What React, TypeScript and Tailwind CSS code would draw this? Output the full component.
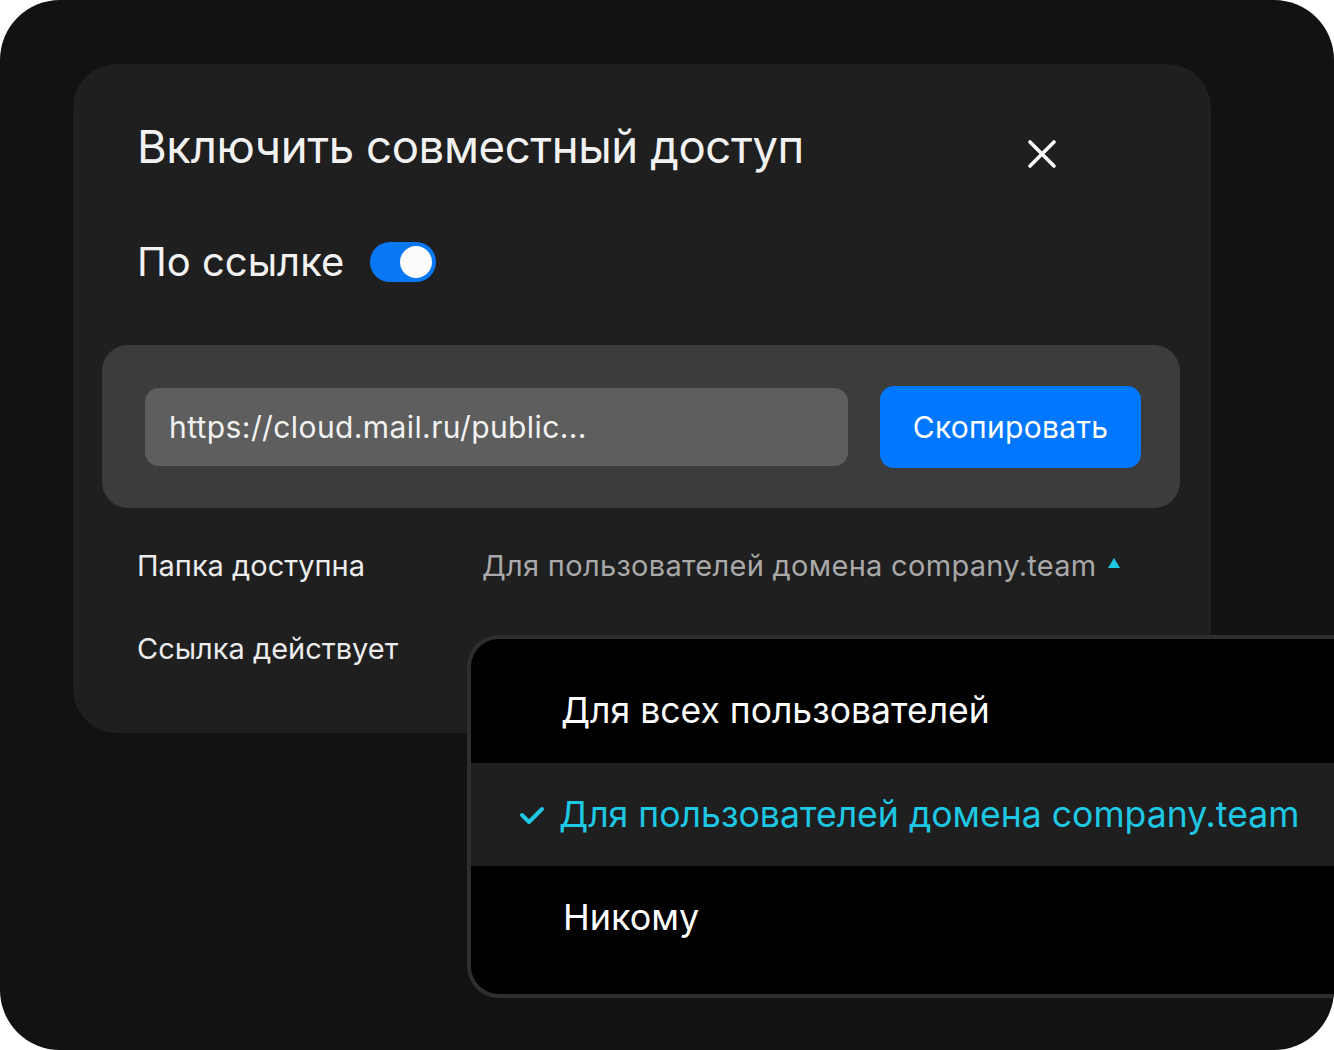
import React from "react";

const font = { fontFamily: "Inter, 'Noto Sans', sans-serif" };

export default function App() {
  return (
    <div className="w-[1334px] h-[1050px] bg-white" style={font}>
      <div className="relative w-[1334px] h-[1050px] rounded-[60px] overflow-hidden bg-[#121212]">
        <div className="ml-[73px] pt-[64px]">
          <div className="w-[1138px] h-[669px] rounded-[44px] bg-[#1f1f1f] pt-[55px]">
            <div className="flex items-center h-[56px] pl-[64px] pr-[150px] justify-between">
              <h1 className="text-[45.5px] leading-none text-[#f2f2f2] font-normal tracking-[-0.4px]">
                Включить совместный доступ
              </h1>
              <svg width="30" height="30" viewBox="0 0 30 30" className="mt-[14px] mr-[4px]">
                <path d="M3 3 L27 27 M27 3 L3 27" stroke="#ffffff" strokeWidth="3.6" strokeLinecap="round" />
              </svg>
            </div>
            <div className="flex items-center h-[40px] mt-[67px] pl-[64px] gap-[26px]">
              <span className="text-[40px] leading-none text-[#f2f2f2]">По ссылке</span>
              <div className="w-[66px] h-[40px] rounded-full bg-[#0a77f5] flex items-center justify-end pr-[4px]">
                <div className="w-[32px] h-[32px] rounded-full bg-[#fdfbfb]" />
              </div>
            </div>
            <div className="ml-[29px] mt-[63px] w-[1078px] h-[163px] rounded-[26px] bg-[#3c3c3c] flex items-center pl-[43px] pr-[39px] gap-[32px]">
              <div className="w-[703px] h-[78px] rounded-[14px] bg-[#5e5e5e] flex items-center pl-[24px]">
                <span className="text-[30px] text-[#f2f2f2] leading-none tracking-[0.4px]">https://cloud.mail.ru/public...</span>
              </div>
              <button className="w-[261px] h-[82px] rounded-[14px] bg-[#0077ff] flex items-center justify-center">
                <span className="text-[30px] text-white leading-none tracking-[0.3px]">Скопировать</span>
              </button>
            </div>
            <div className="flex items-center h-[36px] mt-[39px] pl-[64px]">
              <span className="w-[345px] text-[29px] leading-none text-[#ececec]">Папка доступна</span>
              <span className="text-[29px] leading-none text-[#a9a9a9] tracking-[0.3px]">Для пользователей домена company.team</span>
              <svg width="14" height="12" viewBox="0 0 14 12" className="ml-[10px] mb-[4px]">
                <path d="M7 1 L13 11 L1 11 Z" fill="#1ec8e4" />
              </svg>
            </div>
            <div className="flex items-center h-[36px] mt-[47px] pl-[64px]">
              <span className="text-[29px] leading-none text-[#ececec]">Ссылка действует</span>
            </div>
          </div>
        </div>

        <div className="absolute left-[467px] top-[635px] w-[960px] h-[363px] rounded-[32px] border-[4px] border-[#2e2e2e] bg-black flex flex-col overflow-hidden">
          <div className="h-[124px] flex items-center pl-[90px] pt-[20px]">
            <span className="text-[35.5px] leading-none text-white">Для всех пользователей</span>
          </div>
          <div className="h-[103px] flex items-center bg-[#1f1f1f] pl-[48px]">
            <svg width="26" height="20" viewBox="0 0 26 20" className="mr-[14px]">
              <path d="M3 10 L10 17 L23 4" stroke="#1ec8e4" strokeWidth="4" fill="none" strokeLinecap="round" strokeLinejoin="round" />
            </svg>
            <span className="text-[35.6px] leading-none text-[#1ec8e4]">Для пользователей домена company.team</span>
          </div>
          <div className="flex-1 flex items-start pl-[92px] pt-[33px]">
            <span className="text-[36px] leading-none text-white">Никому</span>
          </div>
        </div>
      </div>
    </div>
  );
}
